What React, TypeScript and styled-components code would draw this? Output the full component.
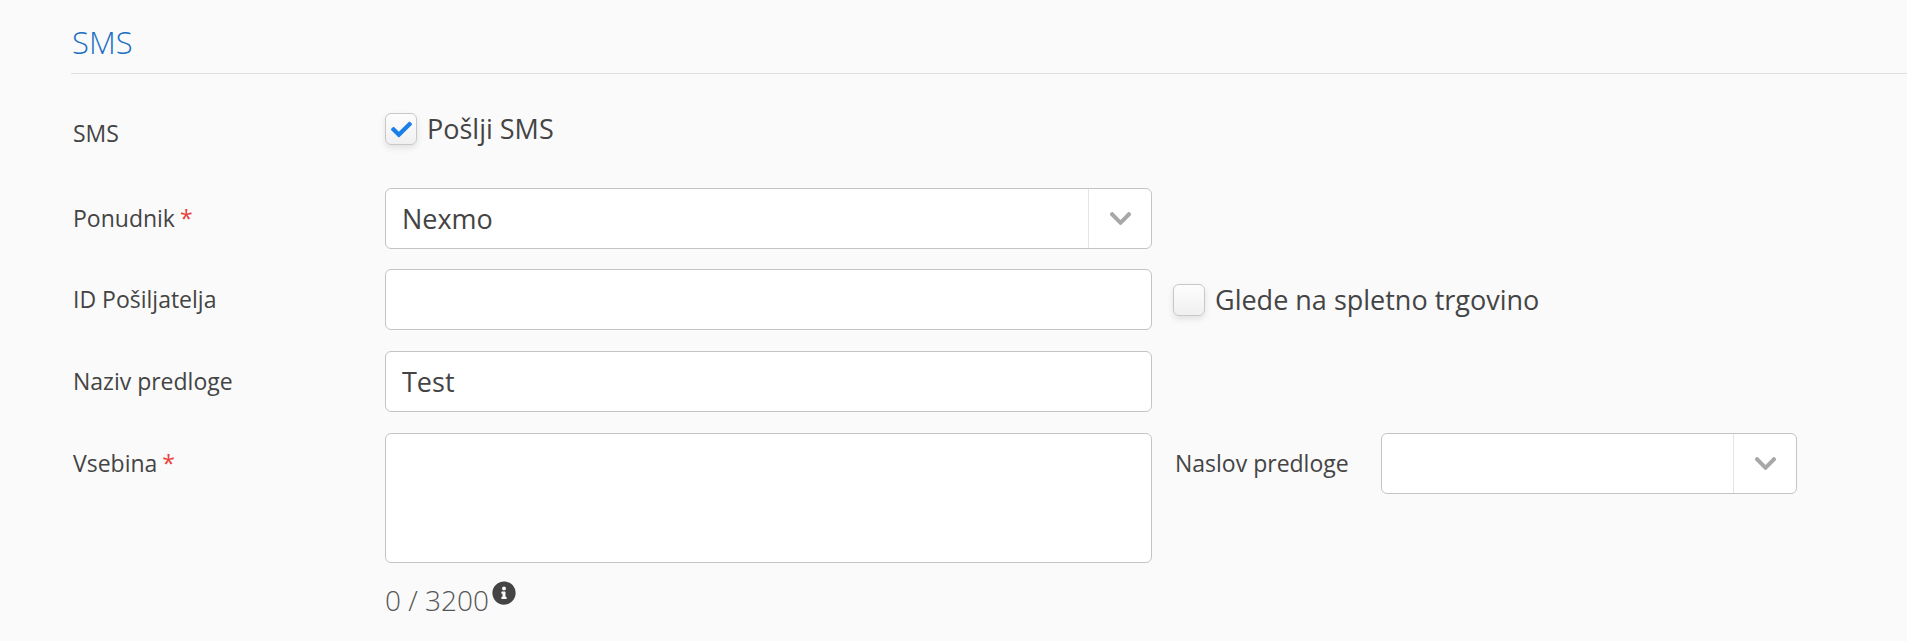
import React from "react";
import styled, { createGlobalStyle } from "styled-components";
import { FaCheck, FaChevronDown, FaInfoCircle } from "react-icons/fa";

const GlobalStyle = createGlobalStyle`
  html, body {
    margin: 0;
    padding: 0;
    background: #fafafa;
    overflow: hidden;
  }
  body {
    font-family: "Open Sans", "Liberation Sans", sans-serif;
    color: #444;
  }
`;

const Page = styled.div`
  height: 641px;
  padding-left: 71px;
  box-sizing: border-box;
`;

const Heading = styled.h2`
  margin: 0;
  height: 74px;
  box-sizing: border-box;
  padding: 21px 0 0 1px;
  font-size: 31px;
  line-height: 42px;
  font-weight: 300;
  color: #1b6fc2;
  border-bottom: 1px solid #e0e0e0;
`;

const Row = styled.div<{ $top: number }>`
  display: flex;
  align-items: flex-start;
  margin-top: ${(p) => p.$top}px;
`;

const Label = styled.label<{ $top?: number }>`
  width: 314px;
  flex: none;
  padding: ${(p) => p.$top ?? 15}px 0 0 2px;
  box-sizing: border-box;
  font-size: 23px;
  line-height: 31px;
`;

const Star = styled.span`
  color: #e8403a;
  margin-left: 5px;
`;

const Field = styled.div<{ $width?: number; $height?: number }>`
  width: ${(p) => p.$width ?? 767}px;
  height: ${(p) => p.$height ?? 61}px;
  flex: none;
  box-sizing: border-box;
  display: flex;
  align-items: center;
  background: #fff;
  border: 1px solid #c4c4c4;
  border-radius: 6px;
  font-size: 27px;
  color: #444;
`;

const Value = styled.div`
  flex: 1;
  padding-left: 16px;
`;

const Arrow = styled.div`
  width: 62px;
  height: 100%;
  flex: none;
  display: flex;
  align-items: center;
  justify-content: center;
  border-left: 1px solid #e4e4e4;
  color: #a8a8a8;
  font-size: 25px;
`;

const Box = styled.span<{ $checked?: boolean }>`
  width: 32px;
  height: 32px;
  flex: none;
  box-sizing: border-box;
  display: flex;
  align-items: center;
  justify-content: center;
  border: 1px solid #c8c8c8;
  border-radius: 6px;
  background: linear-gradient(#fdfdfd, #f0f0f0);
  box-shadow: 0 3px 6px rgba(0, 0, 0, 0.1);
  color: #1a7fe6;
  font-size: 21px;
`;

const CheckLine = styled.div<{ $left?: number; $top?: number }>`
  display: flex;
  align-items: center;
  gap: 10px;
  margin-left: ${(p) => p.$left ?? 0}px;
  margin-top: ${(p) => p.$top ?? 0}px;
  font-size: 27px;
  line-height: 32px;
`;

const Side = styled.div`
  display: flex;
  align-items: flex-start;
  margin-left: 23px;
`;

const SideLabel = styled(Label)`
  width: 206px;
  padding-left: 0;
`;

const Counter = styled.div`
  display: flex;
  align-items: flex-start;
  margin: 18px 0 0 385px;
  margin-left: 314px;
  font-size: 28px;
  line-height: 38px;
  font-weight: 300;
  color: #555;
`;

const Info = styled.span`
  font-size: 24px;
  line-height: 24px;
  margin: 0 0 0 3px;
  color: #444;
`;

export default function App() {
  return (
    <>
      <GlobalStyle />
      <Page>
        <Heading>SMS</Heading>
        <Row $top={39}>
          <Label $top={5}>SMS</Label>
          <CheckLine>
            <Box $checked>
              <FaCheck />
            </Box>
            Pošlji SMS
          </CheckLine>
        </Row>
        <Row $top={39}>
          <Label>
            Ponudnik<Star>*</Star>
          </Label>
          <Field>
            <Value>Nexmo</Value>
            <Arrow>
              <FaChevronDown />
            </Arrow>
          </Field>
        </Row>
        <Row $top={20}>
          <Label>ID Pošiljatelja</Label>
          <Field />
          <CheckLine $left={21} $top={15}>
            <Box />
            Glede na spletno trgovino
          </CheckLine>
        </Row>
        <Row $top={21}>
          <Label>Naziv predloge</Label>
          <Field>
            <Value>Test</Value>
          </Field>
        </Row>
        <Row $top={21}>
          <Label>
            Vsebina<Star>*</Star>
          </Label>
          <Field $height={130} />
          <Side>
            <SideLabel>Naslov predloge</SideLabel>
            <Field $width={416}>
              <Value />
              <Arrow>
                <FaChevronDown />
              </Arrow>
            </Field>
          </Side>
        </Row>
        <Counter>
          0 / 3200
          <Info>
            <FaInfoCircle />
          </Info>
        </Counter>
      </Page>
    </>
  );
}
